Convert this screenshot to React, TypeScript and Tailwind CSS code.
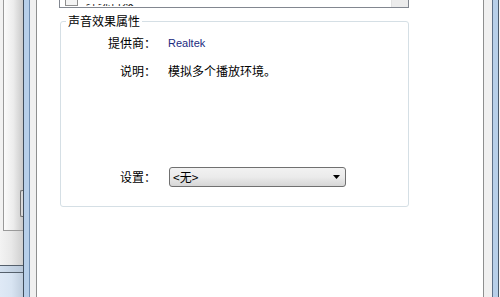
export default function App() {
  const cjk = { fontFamily: '"Noto Sans CJK SC", "Noto Sans", sans-serif' };
  return (
    <div
      className="w-[500px] h-[297px] flex overflow-hidden bg-white text-black"
      style={cjk}
    >
      {/* background window at the left */}
      <div className="w-[23px] h-full flex flex-col bg-[#f0f0f0] shrink-0">
        <div className="h-[231px] flex">
          <div className="w-[3px] bg-[#f2f2f2]" />
          <div className="flex-1 flex justify-end border-l border-b border-[#9a9a9a] bg-gradient-to-r from-[#fbfbfb] via-[#ececec] to-[#c9c9c9]">
            <div className="w-[3px] h-[27px] mt-[190px] border border-r-0 border-[#6f6f6f] rounded-l-[2px] bg-[#d9d9d9]" />
          </div>
        </div>
        <div className="h-[34px] bg-gradient-to-r from-[#f3f3f3] via-[#e8e8e8] to-[#cfcfcf]" />
        <div className="h-[1px] bg-[#55606c]" />
        <div className="h-[6px] bg-gradient-to-r from-[#d3e0ef] to-[#b9c8d9]" />
        <div className="h-[1px] bg-[#55606c]" />
        <div className="flex-1 bg-gradient-to-r from-[#dfe9f6] via-[#d8e4f2] to-[#bfcddd]" />
      </div>

      {/* left frame of dialog */}
      <div className="flex h-full shrink-0">
        <div className="w-[1px] bg-[#3f4d5c]" />
        <div className="w-[5px] bg-[#b7cfe9]" />
        <div className="w-[1px] bg-[#6f8db0]" />
        <div className="w-[6px] bg-[#f0f0f0]" />
        <div className="w-[1px] bg-[#8e8f8f]" />
      </div>

      {/* content */}
      <div className="w-[446px] h-full bg-white flex flex-col shrink-0">
        {/* list box (bottom part visible) */}
        <div className="ml-[22px] w-[350px] h-[8px] flex items-start border-l border-r border-b border-[#828790] overflow-hidden">
          <div className="ml-[5px] w-[13px] h-[6px] border-l border-r border-b border-[#8f8f8f] bg-[#f4f4f4]" />
          <div className="ml-[8px] mt-[4px] h-[2px] overflow-hidden flex items-end">
            <span className="text-[12px] leading-[14px] text-[#222] -mb-[2px] whitespace-nowrap">
              环境音效
            </span>
          </div>
          <div className="ml-auto w-[17px] h-full bg-[#ececec] border-l border-[#e2e2e2]" />
        </div>

        {/* group box */}
        <div className="relative ml-[23px] mt-[13px] w-[349px] h-[186px] border border-[#d5dfe5] rounded-[3px] flex flex-col">
          <span className="absolute left-[5px] -top-[8px] px-[2px] bg-white text-[12px] leading-[14px]">
            声音效果属性
          </span>

          <div className="mt-[13px] flex items-center h-[16px]">
            <div className="w-[95px] text-right text-[12px] leading-[16px]">提供商：</div>
            <div
              className="ml-[12px] text-[11px] leading-[16px] text-[#1b2a80]"
              style={{ fontFamily: '"Liberation Sans", Arial, sans-serif' }}
            >
              Realtek
            </div>
          </div>

          <div className="mt-[12px] flex items-center h-[16px]">
            <div className="w-[95px] text-right text-[12px] leading-[16px]">说明：</div>
            <div className="ml-[12px] text-[12px] leading-[16px]">模拟多个播放环境。</div>
          </div>

          <div className="mt-[88px] flex items-center h-[20px]">
            <div className="w-[95px] text-right text-[12px] leading-[16px]">设置：</div>
            <div className="ml-[13px] w-[177px] h-[20px] flex items-center border border-[#707070] rounded-[3px] bg-gradient-to-b from-[#f2f2f2] via-[#ebebeb] to-[#d6d6d6]">
              <span className="ml-[3px] text-[12px] leading-[16px]">&lt;无&gt;</span>
              <svg className="ml-auto mr-[5px]" width="7" height="4" viewBox="0 0 7 4">
                <path d="M0 0 H7 L3.5 4 Z" fill="#000" />
              </svg>
            </div>
          </div>
        </div>
      </div>

      {/* right frame */}
      <div className="flex h-full shrink-0">
        <div className="w-[1px] bg-[#8e8f8f]" />
        <div className="w-[8px] bg-[#f0f0f0]" />
        <div className="w-[1px] bg-[#5d7088]" />
        <div className="w-[5px] bg-[#b7cfe9]" />
        <div className="w-[1px] bg-[#4a5a6c]" />
        <div className="w-[1px] bg-[#f4f4f4]" />
      </div>
    </div>
  );
}
